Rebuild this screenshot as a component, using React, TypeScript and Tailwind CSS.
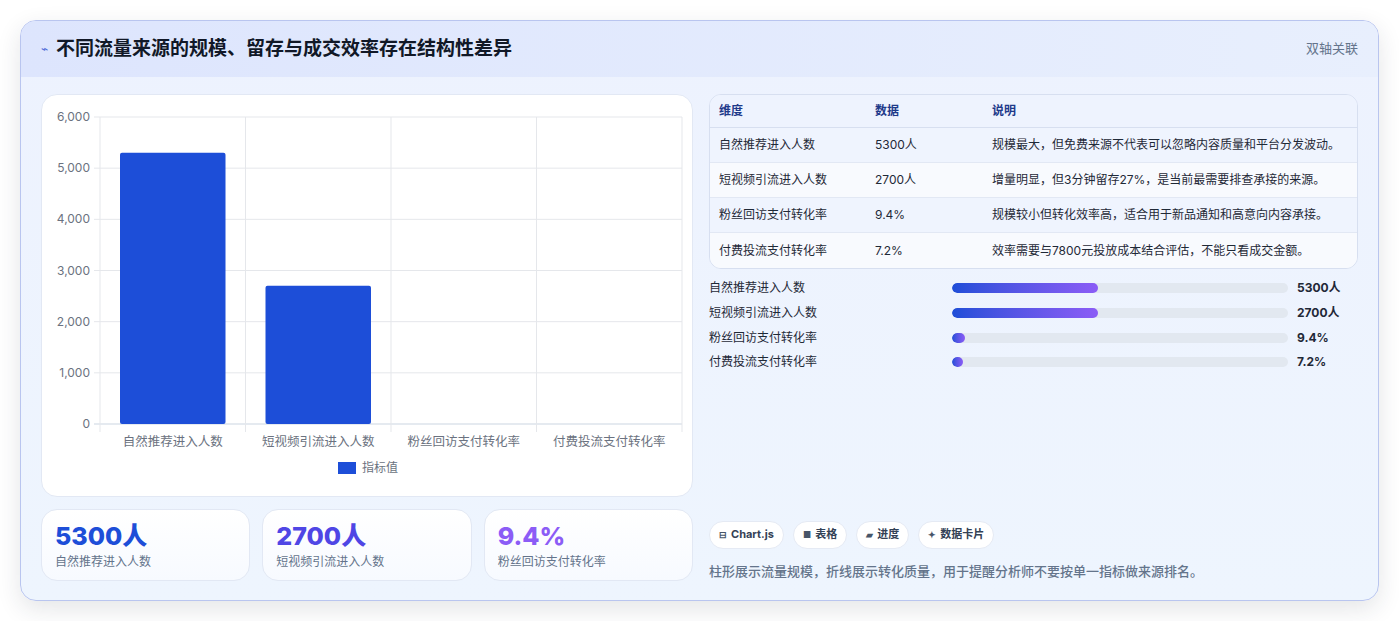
const font = { fontFamily: '"Inter","Noto Sans CJK SC",sans-serif' };

const rows = [
  { k: "自然推荐进入人数", v: "5300人", d: "规模最大，但免费来源不代表可以忽略内容质量和平台分发波动。", pct: 43.5 },
  { k: "短视频引流进入人数", v: "2700人", d: "增量明显，但3分钟留存27%，是当前最需要排查承接的来源。", pct: 43.5 },
  { k: "粉丝回访支付转化率", v: "9.4%", d: "规模较小但转化效率高，适合用于新品通知和高意向内容承接。", pct: 4 },
  { k: "付费投流支付转化率", v: "7.2%", d: "效率需要与7800元投放成本结合评估，不能只看成交金额。", pct: 3.2 },
];

function Chart() {
  const x0 = 58, x1 = 640, y0 = 22, y1 = 329;
  const cw = (x1 - x0) / 4;
  const vals = [5300, 2700, 0, 0];
  const ticks = [0, 1000, 2000, 3000, 4000, 5000, 6000];
  const yOf = (v: number) => y1 - (v / 6000) * (y1 - y0);
  return (
    <svg width="652" height="403" className="block">
      {ticks.map((t) => (
        <g key={t}>
          <line x1={x0 - 6} x2={x1} y1={yOf(t)} y2={yOf(t)} stroke={t === 0 ? "#cbd5e1" : "#e5e7eb"} />
          <text x={x0 - 10} y={yOf(t) + 4} textAnchor="end" fontSize="12" fill="#6b7280" style={font}>
            {t.toLocaleString("en-US")}
          </text>
        </g>
      ))}
      {[0, 1, 2, 3, 4].map((i) => (
        <line key={i} x1={x0 + i * cw} x2={x0 + i * cw} y1={y0} y2={y1 + 8} stroke="#e5e7eb" />
      ))}
      {vals.map((v, i) =>
        v ? (
          <rect key={i} x={x0 + i * cw + 20} y={yOf(v)} width={cw - 40} height={y1 - yOf(v)} rx="2" fill="#1d4ed8" />
        ) : null
      )}
      {rows.map((r, i) => (
        <text key={r.k} x={x0 + i * cw + cw / 2} y={351} textAnchor="middle" fontSize="12.5" fill="#6b7280" style={font}>
          {r.k}
        </text>
      ))}
      <rect x="296" y="367" width="18" height="12" fill="#1d4ed8" />
      <text x="320" y="377" fontSize="12" fill="#6b7280" style={font}>指标值</text>
    </svg>
  );
}

export default function App() {
  return (
    <div className="min-h-screen bg-white p-5" style={font}>
      <div className="rounded-2xl border border-[#b9c5ef] bg-gradient-to-b from-[#edf2fe] to-[#eef5fe] shadow-[0_8px_24px_rgba(30,41,59,0.12)] overflow-hidden">
        <div className="h-14 flex items-center justify-between px-5 bg-gradient-to-r from-[#dde5fd] to-[#e8effd]">
          <div className="flex items-center gap-2">
            <span className="text-[#4f6bd8] text-xs">⌁</span>
            <h1 className="text-[19px] font-bold text-[#111827]">不同流量来源的规模、留存与成交效率存在结构性差异</h1>
          </div>
          <span className="text-[13px] text-[#64748b]">双轴关联</span>
        </div>
        <div className="flex gap-4 px-5 pt-[17px] pb-[19px]">
          <div className="w-[652px] flex flex-col gap-3">
            <div className="h-[403px] rounded-2xl bg-white border border-[#e2e8f4]">
              <Chart />
            </div>
            <div className="grid grid-cols-3 gap-3">
              {[
                ["5300人", "自然推荐进入人数", "text-[#1d4ed8]"],
                ["2700人", "短视频引流进入人数", "text-[#4f46e5]"],
                ["9.4%", "粉丝回访支付转化率", "text-[#8b5cf6]"],
              ].map(([v, l, c]) => (
                <div key={l} className="h-[72px] rounded-2xl bg-gradient-to-b from-white to-[#f7faff] border border-[#e2e8f4] px-[13px] pt-[10px]">
                  <div className={`text-[25px] leading-8 font-extrabold ${c}`}>{v}</div>
                  <div className="text-xs text-[#64748b] mt-[2px]">{l}</div>
                </div>
              ))}
            </div>
          </div>
          <div className="flex-1 flex flex-col">
            <div className="rounded-xl border border-[#d7dff0] overflow-hidden bg-[#f2f6fe]">
              <div className="h-[33px] flex items-center text-xs font-semibold text-[#1e3a8a] border-b border-[#d7dff0] bg-[#eef3fe]">
                <span className="w-[165px] pl-[9px]">维度</span>
                <span className="w-[117px]">数据</span>
                <span>说明</span>
              </div>
              {rows.map((r, i) => (
                <div key={r.k} className={`h-[35px] flex items-center text-xs text-[#1f2937] ${i < 3 ? "border-b border-[#e2e8f4]" : ""} ${i % 2 ? "bg-[#f8fafe]" : "bg-[#eff4fe]"}`}>
                  <span className="w-[165px] pl-[9px]">{r.k}</span>
                  <span className="w-[117px]">{r.v}</span>
                  <span>{r.d}</span>
                </div>
              ))}
            </div>
            <div className="mt-[7px] flex flex-col">
              {rows.map((r) => (
                <div key={r.k} className="h-[24.7px] flex items-center text-xs">
                  <span className="w-[243px] text-[#1f2937]">{r.k}</span>
                  <div className="w-[336px] h-[10px] rounded-full bg-[#e2e8f0] overflow-hidden">
                    <div className="h-full rounded-full bg-gradient-to-r from-[#1d4ed8] to-[#8b5cf6]" style={{ width: `${r.pct}%` }} />
                  </div>
                  <span className="ml-[9px] font-bold text-[#1f2937]">{r.v}</span>
                </div>
              ))}
            </div>
            <div className="mt-auto flex gap-[9px]">
              {[
                ["⊟", "Chart.js"],
                ["■", "表格"],
                ["▰", "进度"],
                ["✦", "数据卡片"],
              ].map(([ic, t]) => (
                <span key={t} className="h-[28px] px-[9px] rounded-full bg-white border border-[#e5eaf4] flex items-center gap-1 text-[11px] font-bold text-[#334155]">
                  <span className="text-[9px] text-[#475569]">{ic}</span>
                  {t}
                </span>
              ))}
            </div>
            <p className="mt-[13px] text-[13px] text-[#64748b] font-medium">柱形展示流量规模，折线展示转化质量，用于提醒分析师不要按单一指标做来源排名。</p>
          </div>
        </div>
      </div>
    </div>
  );
}
